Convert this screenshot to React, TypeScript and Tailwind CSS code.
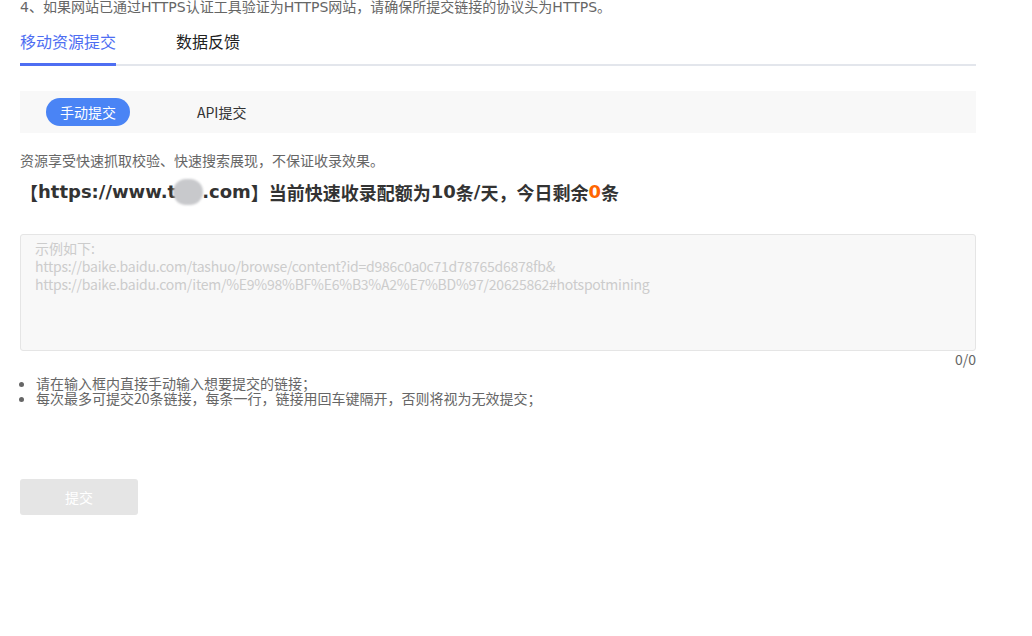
import React from "react";

export default function App() {
  const latin = "font-['DejaVu_Sans','Noto_Sans_CJK_SC',sans-serif]";
  return (
    <div className="w-[1032px] h-[636px] bg-white overflow-hidden font-['Noto_Sans_CJK_SC',sans-serif]">
      <div className="pl-[20px] w-[976px]">
        <div className="h-[14px] text-[14px] leading-[14px] text-[#666] -mt-[1px] whitespace-nowrap">
          <span className="font-['DejaVu_Sans','Noto_Sans_CJK_SC',sans-serif]">4</span>、如果网站已通过
          <span className="font-['DejaVu_Sans','Noto_Sans_CJK_SC',sans-serif]">HTTPS</span>认证工具验证为
          <span className="font-['DejaVu_Sans','Noto_Sans_CJK_SC',sans-serif]">HTTPS</span>网站，请确保所提交链接的协议头为
          <span className="font-['DejaVu_Sans','Noto_Sans_CJK_SC',sans-serif]">HTTPS</span>。
        </div>
        <div className="flex border-b-2 border-[#e3e6ec] mt-[16px] h-[37px]">
          <div className="relative text-[16px] leading-[24px] text-[#4e6ef2] w-[96px]">
            移动资源提交
            <div className="absolute left-0 right-0 -bottom-[2px] h-[3px] bg-[#4e6ef2]" />
          </div>
          <div className="ml-[60px] text-[16px] leading-[24px] text-[#222]">数据反馈</div>
        </div>
        <div className="mt-[25px] h-[42px] bg-[#f8f8f8] flex items-center pl-[26px]">
          <div className="h-[28px] w-[84px] rounded-full bg-[#4a84f5] text-white text-[14px] flex items-center justify-center">
            手动提交
          </div>
          <div className="ml-[67px] text-[14px] text-[#333]">API提交</div>
        </div>
        <div className="mt-[18px] text-[14px] leading-[18px] text-[#666]">
          资源享受快速抓取校验、快速搜索展现，不保证收录效果。
        </div>
        <div className="mt-[10px] h-[26px] text-[18px] leading-[26px] font-bold text-[#333] flex items-center whitespace-nowrap">
          <span>【</span>
          <span className={latin}>https://www.t</span>
          <span className="relative inline-block w-[26px] h-[20px]">
            <span className="absolute -left-[3px] top-[-3px] w-[30px] h-[26px] rounded-[13px] bg-[#c8c9cc] blur-[1px]" />
          </span>
          <span className={latin}>.com</span>
          <span>】当前快速收录配额为</span>
          <span className={latin}>10</span>
          <span>条</span>
          <span className={latin}>/</span>
          <span>天，今日剩余</span>
          <span className="text-[#ff6600] font-['DejaVu_Sans',sans-serif]">0</span>
          <span>条</span>
        </div>
        <div className="mt-[29px] h-[117px] bg-[#f8f8f8] border border-[#e5e5e5] rounded-[3px] px-[14px] pt-[4px] text-[14px] leading-[18px] text-[#cccccc]">
          <div>示例如下:</div>
          <div className="tracking-[-0.25px]">https://baike.baidu.com/tashuo/browse/content?id=d986c0a0c71d78765d6878fb&amp;</div>
          <div className="tracking-[-0.25px]">https://baike.baidu.com/item/%E9%98%BF%E6%B3%A2%E7%BD%97/20625862#hotspotmining</div>
        </div>
        <div className="text-right text-[14px] leading-[16px] text-[#666]">0/0</div>
        <ul className="mt-[9px] list-disc pl-[16px] text-[14px] leading-[15px] text-[#666]">
          <li>请在输入框内直接手动输入想要提交的链接；</li>
          <li>每次最多可提交20条链接，每条一行，链接用回车键隔开，否则将视为无效提交；</li>
        </ul>
        <div className="mt-[73px] w-[118px] h-[36px] rounded-[3px] bg-[#e5e5e5] text-white text-[14px] flex items-center justify-center">
          提交
        </div>
      </div>
    </div>
  );
}
